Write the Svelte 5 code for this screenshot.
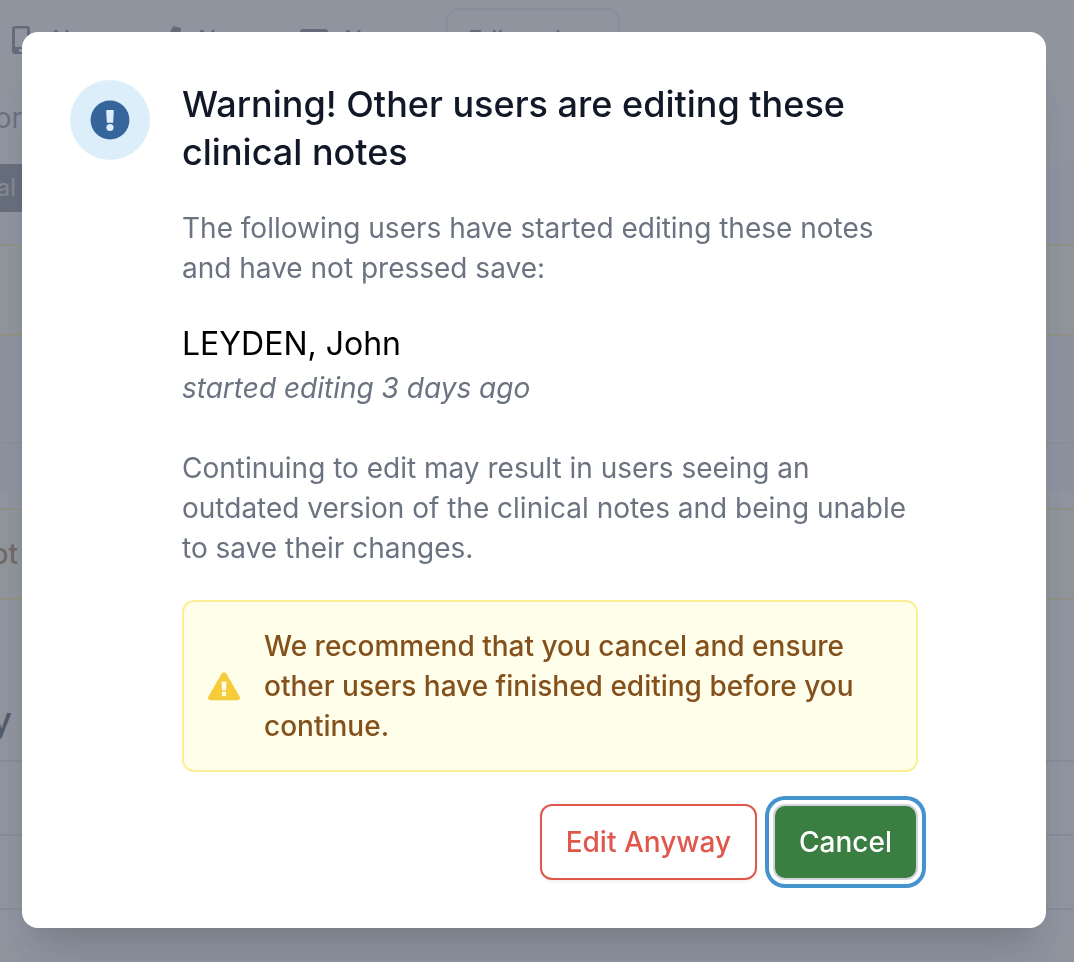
<script lang="ts">
  interface Editor {
    name: string;
    started: string;
  }

  const editors: Editor[] = [{ name: 'LEYDEN, John', started: '3 days ago' }];

  let open = $state(true);

  function close() {
    open = false;
  }
</script>

<main class="page">
  <header class="contacts">
    <span class="contact">
      <svg width="28" height="28" viewBox="0 0 28 28" aria-hidden="true">
        <path fill="currentColor" fill-rule="evenodd" d="M7 0h12a3 3 0 0 1 3 3v22a3 3 0 0 1-3 3H7a3 3 0 0 1-3-3V3a3 3 0 0 1 3-3zm0 2.5v18.500h12V2.500H7zm4 20.500v3h4v-3h-4z" />
      </svg>
      None
    </span>
    <span class="contact">
      <svg width="28" height="28" viewBox="0 0 28 28" aria-hidden="true">
        <path fill="currentColor" d="M19.500 0l7.500 2-1 8-4 2c-2 5-5 8-9 10l-4-2-2 5C4 26 2 25 1 24c8-4 13-11 16-20z" />
      </svg>
      None
    </span>
    <span class="contact">
      <svg width="28" height="28" viewBox="0 0 28 28" aria-hidden="true">
        <path fill="currentColor" fill-rule="evenodd" d="M3 3h22a3 3 0 0 1 3 3v16a3 3 0 0 1-3 3H3a3 3 0 0 1-3-3V6a3 3 0 0 1 3-3zm0 4v3l11 8 11-8V7H3z" />
      </svg>
      None
    </span>
    <button class="edit-patient" type="button">Edit patient</button>
  </header>
  <div class="row doctor"><span class="edge">or</span></div>
  <div class="tabs"><span class="edge tab">al</span></div>
  <div class="alert"></div>
  <div class="tinted"></div>
  <div class="tinted footer"></div>
  <div class="alert note"><span class="edge">ot</span></div>
  <h1 class="row heading"><span class="edge">y</span></h1>
  <div class="line"></div>
  <div class="line"></div>
  <div class="line"></div>
</main>

{#if open}
  <div class="overlay">
    <div class="dialog" role="alertdialog" aria-modal="true" aria-labelledby="dialog-title">
      <div class="badge">
        <svg width="40" height="40" viewBox="0 0 40 40" aria-hidden="true">
          <circle cx="20" cy="20" r="19.4" fill="#36659c" />
          <path fill="#dceef9" d="M16.2 10.900a.8.8 0 0 1 .8-.9h6a.8.8 0 0 1 .8.900l-.6 11a.8.8 0 0 1-.8.8h-4.800a.8.8 0 0 1-.8-.8z" />
          <circle cx="20" cy="27.5" r="3.6" fill="#dceef9" />
        </svg>
      </div>

      <div class="content">
        <h2 id="dialog-title">Warning! Other users are editing these clinical notes</h2>
        <p>The following users have started editing these notes and have not pressed save:</p>

        <ul>
          {#each editors as editor (editor.name)}
            <li>
              <div class="name">{editor.name}</div>
              <div class="started">started editing {editor.started}</div>
            </li>
          {/each}
        </ul>

        <p class="consequence">
          Continuing to edit may result in users seeing an outdated version of the clinical notes and being unable to
          save their changes.
        </p>

        <div class="advice">
          <svg width="32" height="32" viewBox="0 0 32 32" aria-hidden="true">
            <path fill="#f6cb3c" d="M13.7 3.5a2.7 2.7 0 0 1 4.6 0l13.3 23a2.4 2.4 0 0 1-2.2 3.7H2.6a2.4 2.4 0 0 1-2.200-3.700z" />
            <path fill="#fffeeb" d="M13.600 12.200a.5.5 0 0 1 .5-.6h3.800a.5.5 0 0 1 .5.6l-.4 7.500a.6.6 0 0 1-.6.5h-2.800a.6.6 0 0 1-.6-.5z" />
            <circle cx="16" cy="24" r="2.4" fill="#fffeeb" />
          </svg>
          <span>We recommend that you cancel and ensure other users have finished editing before you continue.</span>
        </div>

        <div class="actions">
          <button class="danger" type="button" onclick={close}>Edit Anyway</button>
          <button class="cancel" type="button" onclick={close}>Cancel</button>
        </div>
      </div>
    </div>
  </div>
{/if}

<style>
  :global(body) {
    margin: 0;
    background: #fafbfc;
    font-family: Inter, 'Liberation Sans', sans-serif;
    font-size: 28px;
    line-height: 40px;
  }

  :global(*) {
    box-sizing: border-box;
  }

  button {
    font: inherit;
    font-weight: 500;
    border-radius: 12px;
    cursor: pointer;
  }

  h1,
  h2,
  p,
  ul {
    margin: 0;
    padding: 0;
  }

  .page {
    overflow: hidden;
    color: #6b7280;
  }

  .contacts {
    display: flex;
    align-items: center;
    gap: 16px;
    padding: 8px;
    color: #4b5563;
    font-size: 24px;
    font-weight: 500;
  }

  .contact {
    display: flex;
    align-items: center;
    gap: 16px;
    width: 130px;
  }

  .contact svg {
    flex-shrink: 0;
  }

  .edit-patient {
    padding: 10px 20px;
    background: transparent;
    border: 2px solid #e0e3e8;
    color: #4b5563;
    font-size: 24px;
  }

  .edge {
    display: flex;
    justify-content: flex-end;
    width: 22px;
  }

  .row {
    display: flex;
    align-items: center;
    min-height: 84px;
  }

  .doctor {
    padding-bottom: 8px;
  }

  .tabs {
    padding-bottom: 32px;
    background: #f6f7fc;
  }

  .tab {
    width: 28px;
    padding: 4px 12px 4px 0;
    background: #5d6470;
    color: #d1d5db;
    font-size: 24px;
  }

  .alert {
    min-height: 92px;
    background: #fffeeb;
    border: solid #fcf09a;
    border-width: 2px 0;
  }

  .tinted {
    min-height: 106px;
    background: #f3f4fb;
  }

  .footer {
    min-height: 50px;
    margin-bottom: 16px;
    border-top: 2px solid #e5e7eb;
  }

  .note {
    display: flex;
    align-items: center;
    color: #84511c;
    font-weight: 500;
  }

  .note .edge {
    width: 18px;
  }

  .heading {
    min-height: 160px;
    padding-top: 80px;
    color: #111827;
    font-size: 36px;
    font-weight: 500;
  }

  .heading .edge {
    width: 12px;
  }

  .line {
    min-height: 74px;
    border-top: 2px solid #d5d8df;
  }

  .overlay {
    position: fixed;
    inset: 0;
    overflow: auto;
    padding: 32px 22px 32px 16px;
    background: rgb(107 114 128 / 75%);
  }

  .dialog {
    display: flex;
    align-items: flex-start;
    gap: 32px;
    max-width: 1024px;
    margin: 0 auto;
    padding: 48px 128px 48px 48px;
    background: #fff;
    border-radius: 16px;
    box-shadow:
      0 40px 50px -10px rgb(0 0 0 / 10%),
      0 20px 20px -10px rgb(0 0 0 / 6%);
  }

  .badge {
    display: flex;
    flex-shrink: 0;
    align-items: center;
    justify-content: center;
    width: 80px;
    height: 80px;
    background: #dceef9;
    border-radius: 50%;
  }

  .content {
    flex: 1;
    min-width: 0;
    color: #6b7280;
  }

  h2 {
    margin-bottom: 32px;
    color: #111827;
    font-size: 36px;
    font-weight: 500;
    line-height: 48px;
  }

  ul {
    margin: 32px 0 40px;
    list-style: none;
  }

  .name {
    color: #000;
    font-size: 32px;
    line-height: 48px;
  }

  .started {
    font-style: italic;
  }

  .advice {
    display: flex;
    align-items: center;
    gap: 24px;
    margin: 32px 0;
    padding: 24px;
    background: #fffeeb;
    border: 2px solid #fcee93;
    border-radius: 12px;
    color: #84511c;
    font-weight: 500;
  }

  .advice svg {
    flex-shrink: 0;
  }

  .actions {
    display: flex;
    justify-content: flex-end;
    gap: 16px;
  }

  .actions button {
    padding: 16px 24px;
    border: 2px solid;
    box-shadow: 0 2px 4px rgb(0 0 0 / 5%);
  }

  .actions .danger {
    background: #fff;
    border-color: #e0574b;
    color: #e0574b;
  }

  .actions .cancel {
    background: #3a7e42;
    border-color: #d1d5db;
    color: #fff;
    outline: none;
    box-shadow:
      0 0 0 4px #fff,
      0 0 0 8px #4493cf;
  }
</style>
